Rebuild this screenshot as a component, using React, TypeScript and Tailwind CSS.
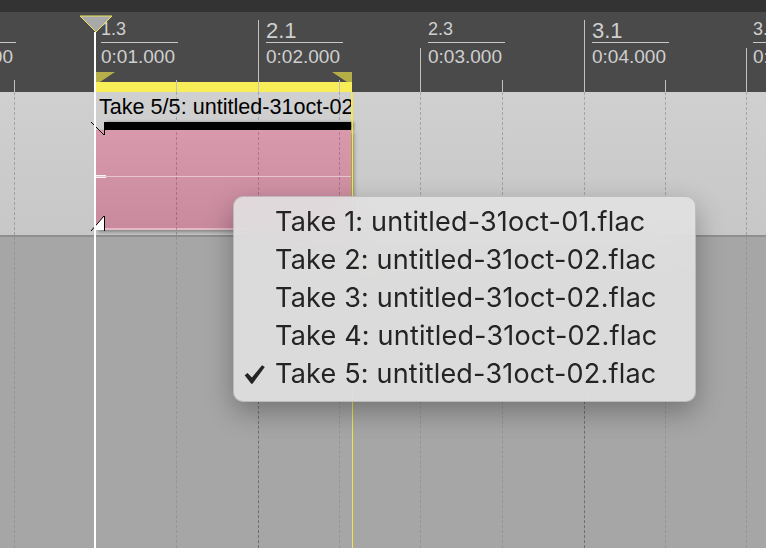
import React from "react"

type Kind = "b" | "h" | "q"

const grid: { x: string; kind: Kind }[] = [
  { x: "left-[14px]", kind: "q" },
  { x: "left-[95px]", kind: "h" },
  { x: "left-[176px]", kind: "q" },
  { x: "left-[258px]", kind: "b" },
  { x: "left-[339px]", kind: "q" },
  { x: "left-[420px]", kind: "h" },
  { x: "left-[502px]", kind: "q" },
  { x: "left-[584px]", kind: "b" },
  { x: "left-[665px]", kind: "q" },
  { x: "left-[746px]", kind: "h" },
]

const rulerTop: Record<Kind, string> = {
  b: "top-[8px]",
  h: "top-[36px]",
  q: "top-[68px]",
}

const labels = [
  { x: "left-[-61px]", beat: "1.1", time: "0:00.000", big: true },
  { x: "left-[101px]", beat: "1.3", time: "0:01.000", big: false },
  { x: "left-[266px]", beat: "2.1", time: "0:02.000", big: true },
  { x: "left-[428px]", beat: "2.3", time: "0:03.000", big: false },
  { x: "left-[592px]", beat: "3.1", time: "0:04.000", big: true },
  { x: "left-[753px]", beat: "3.3", time: "0:05.000", big: false },
]

const takes = [
  "Take 1: untitled-31oct-01.flac",
  "Take 2: untitled-31oct-02.flac",
  "Take 3: untitled-31oct-02.flac",
  "Take 4: untitled-31oct-02.flac",
  "Take 5: untitled-31oct-02.flac",
]

function Ruler() {
  return (
    <div className="relative h-[80px] shrink-0 bg-[#4a4a4a] font-['Liberation_Sans',Arial,sans-serif] text-[#cfcfcf]">
      {/* clip selection bar */}
      <div className="absolute left-[95px] top-[70px] h-[10px] w-[257px] bg-[#f8ef58]" />
      <svg className="absolute left-[95px] top-[60px] h-[10px] w-[257px]" viewBox="0 0 257 10">
        <polygon points="0,0 20,0 5,10 0,10" fill="#b6ae48" />
        <polygon points="237,0 257,0 257,10 252,10" fill="#b6ae48" />
      </svg>

      {grid.map((g) => (
        <div key={g.x} className={`absolute bottom-0 w-px bg-[#c2c2c2] ${g.x} ${rulerTop[g.kind]}`} />
      ))}

      {labels.map((l) => (
        <div key={l.beat} className={`absolute top-0 h-full w-[80px] ${l.x}`}>
          {l.big ? (
            <div className="absolute left-0 top-[8px] text-[22px] leading-[22px]">{l.beat}</div>
          ) : (
            <div className="absolute left-0 top-[8px] text-[18px] leading-[18px]">{l.beat}</div>
          )}
          <div className="absolute left-0 top-[30px] h-px w-[77px] bg-[#c8c8c8]" />
          <div className="absolute left-0 top-[35px] whitespace-nowrap text-[19px] leading-[19px]">{l.time}</div>
        </div>
      ))}
    </div>
  )
}

function Clip() {
  return (
    <div className="absolute left-[95px] top-0 flex h-[138px] w-[257px] flex-col border-r border-[#f5ec55] font-['Liberation_Sans',Arial,sans-serif]">
      <div className="h-[30px] overflow-hidden whitespace-nowrap pl-[4px] pt-[4px] text-[21.6px] leading-[21px] text-black">
        Take 5/5: untitled-31oct-02
      </div>
      <div className="ml-[9px] h-[8px] bg-black shadow-[3px_0_3px_rgba(0,0,0,0.35)]" />
      <div className="relative h-[100px] border-b-2 border-[#e4b8c4] bg-linear-to-b from-[#d999ac] to-[#c98a9e] shadow-[3px_2px_4px_rgba(0,0,0,0.35)]">
        <div className="absolute left-0 right-0 top-[46px] h-px bg-white/45" />
        <div className="absolute left-[1px] top-[45px] h-px w-[10px] bg-white/90" />
        <div className="absolute left-[1px] top-[47px] h-px w-[10px] bg-white/90" />
      </div>
      <svg className="absolute left-[-5px] top-0 h-[145px] w-[20px] overflow-visible" viewBox="-5 0 20 145">
        <line x1="-4" y1="30" x2="9" y2="43" stroke="black" strokeWidth="1" />
        <line x1="9.5" y1="30" x2="9.5" y2="43" stroke="black" strokeWidth="1" />
        <polygon points="0,134 9,124 9,138 0,138" fill="white" />
        <line x1="-4" y1="139" x2="9" y2="124" stroke="black" strokeWidth="1" />
        <line x1="9.5" y1="124" x2="9.5" y2="139" stroke="black" strokeWidth="1" />
      </svg>
    </div>
  )
}

function Track() {
  return (
    <div className="relative h-[145px] shrink-0 border-b-2 border-[#8f8f8f] bg-linear-to-b from-[#d0d0d0] to-[#c7c7c7]">
      <Clip />
      {grid.map((g) => (
        <div key={g.x} className={`absolute bottom-0 top-0 border-l border-dashed border-black/20 ${g.x}`} />
      ))}
    </div>
  )
}

function Lower() {
  return (
    <div className="relative flex-1 bg-[#a6a6a6]">
      {grid.map((g) =>
        g.kind === "b" ? (
          <div key={g.x} className={`absolute bottom-0 top-0 border-l border-dashed border-[#6f6f6f] ${g.x}`} />
        ) : (
          <div key={g.x} className={`absolute bottom-0 top-0 border-l border-dashed border-black/10 ${g.x}`} />
        ),
      )}
    </div>
  )
}

function TakesMenu() {
  return (
    <div className="absolute left-[233px] top-[196px] h-[206px] w-[463px] rounded-[10px] border border-black/15 bg-[#e3e3e3]/88 pb-[8px] pt-[6px] font-['Inter',sans-serif] text-[#242424] shadow-[0_10px_28px_rgba(0,0,0,0.3)] backdrop-blur-xl">
      {takes.map((t, i) => (
        <div key={t} className="flex h-[38px] items-center pl-[10px]">
          <div className="flex w-[31px] shrink-0 items-center">
            {i === takes.length - 1 && (
              <svg className="h-[19px] w-[21px]" viewBox="0 0 20 18">
                <path d="M0.6 9.8 L3.4 7.6 L7.5 11.8 L17.2 0.2 L19.8 1.9 L8.1 17.8 L6.9 17.8 Z" fill="#242424" />
              </svg>
            )}
          </div>
          <span className="whitespace-nowrap text-[27px] leading-[38px] tracking-[0.2px]">{t}</span>
        </div>
      ))}
    </div>
  )
}

export default function App() {
  return (
    <div className="relative flex h-[548px] w-[766px] flex-col overflow-hidden">
      <div className="h-[12px] shrink-0 bg-[#333333]" />
      <Ruler />
      <Track />
      <Lower />

      {/* yellow clip end line */}
      <div className="absolute bottom-0 left-[352px] top-[92px] w-px bg-[#f0e64c]" />

      {/* playhead */}
      <div className="absolute bottom-0 left-[94px] top-[32px] w-[2px] bg-white" />
      <svg className="absolute left-[79px] top-[15px] h-[18px] w-[34px]" viewBox="0 0 34 18">
        <polygon points="1,1 33,1 17,17" fill="#a9a9a9" stroke="#e9e163" strokeWidth="1" />
      </svg>

      <TakesMenu />
    </div>
  )
}
